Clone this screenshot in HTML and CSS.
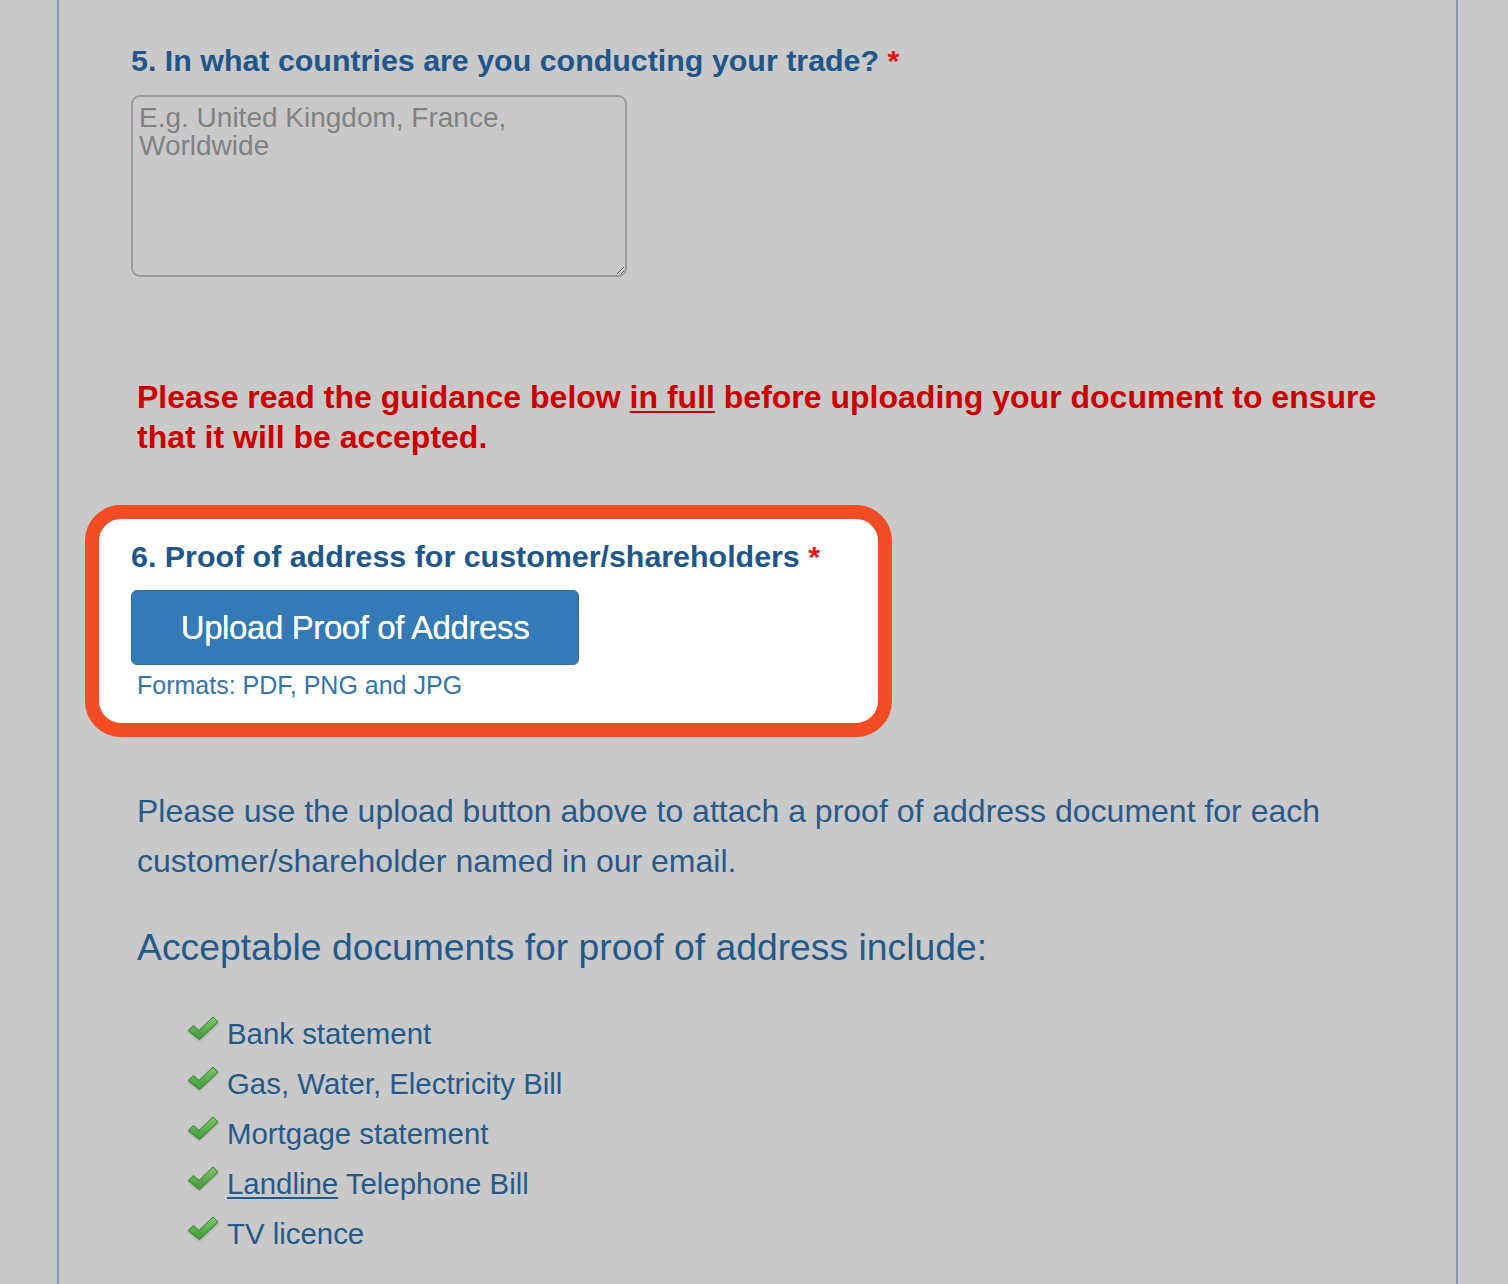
FILE: index.html
```html
<!DOCTYPE html>
<html lang="en">
<head>
<meta charset="utf-8">
<title>Proof of address</title>
<link rel="stylesheet" href="styles.css">
</head>
<body>
<div class="page">
  <div class="field">
    <h2 class="q">5. In what countries are you conducting your trade? <span class="req">*</span></h2>
    <textarea class="countries" placeholder="E.g. United Kingdom, France, Worldwide"></textarea>
  </div>

  <p class="warn">Please read the guidance below <u>in full</u> before uploading your document to ensure that it will be accepted.</p>

  <div class="highlight">
    <h2 class="q">6. Proof of address for customer/shareholders <span class="req">*</span></h2>
    <button class="upload" type="button">Upload Proof of Address</button>
    <div class="formats">Formats: PDF, PNG and JPG</div>
  </div>

  <p class="info">Please use the upload button above to attach a proof of address document for each customer/shareholder named in our email.</p>

  <h3 class="docs">Acceptable documents for proof of address include:</h3>

  <svg class="defs" width="0" height="0" aria-hidden="true"><defs><linearGradient id="g" x1="0" y1="0" x2="0" y2="1"><stop offset="0" stop-color="#7cc966"/><stop offset="1" stop-color="#3e9a36"/></linearGradient></defs></svg>
  <ul class="list">
    <li><svg class="tick" viewBox="0 0 32 26"><path d="M1.2 15.5 L6.5 10.5 L12 15.5 L26 2 L31 7 L12.5 24.5 Z" fill="url(#g)" stroke="#3a7f33" stroke-width="1" stroke-linejoin="round"/></svg><span>Bank statement</span></li>
    <li><svg class="tick" viewBox="0 0 32 26"><path d="M1.2 15.5 L6.5 10.5 L12 15.5 L26 2 L31 7 L12.5 24.5 Z" fill="url(#g)" stroke="#3a7f33" stroke-width="1" stroke-linejoin="round"/></svg><span>Gas, Water, Electricity Bill</span></li>
    <li><svg class="tick" viewBox="0 0 32 26"><path d="M1.2 15.5 L6.5 10.5 L12 15.5 L26 2 L31 7 L12.5 24.5 Z" fill="url(#g)" stroke="#3a7f33" stroke-width="1" stroke-linejoin="round"/></svg><span>Mortgage statement</span></li>
    <li><svg class="tick" viewBox="0 0 32 26"><path d="M1.2 15.5 L6.5 10.5 L12 15.5 L26 2 L31 7 L12.5 24.5 Z" fill="url(#g)" stroke="#3a7f33" stroke-width="1" stroke-linejoin="round"/></svg><span><u>Landline</u> Telephone Bill</span></li>
    <li><svg class="tick" viewBox="0 0 32 26"><path d="M1.2 15.5 L6.5 10.5 L12 15.5 L26 2 L31 7 L12.5 24.5 Z" fill="url(#g)" stroke="#3a7f33" stroke-width="1" stroke-linejoin="round"/></svg><span>TV licence</span></li>
  </ul>
</div>
</body>
</html>
```

FILE: styles.css
```css
html, body {
  margin: 0;
  padding: 0;
  background: #c9c9c9;
  height: 100%;
}
body {
  font-family: "Liberation Sans", Arial, Helvetica, sans-serif;
}
.page {
  margin-left: 57px;
  width: 1401px;
  min-height: 1284px;
  border-left: 2px solid #8796ae;
  border-right: 2px solid #8796ae;
  padding: 43px 0 0 0;
  box-sizing: border-box;
  overflow: hidden;
}
.q {
  margin: 0 0 0 72px;
  font-size: 30.4px;
  line-height: 34px;
  font-weight: bold;
  color: #21568a;
}
.req {
  color: #e8120c;
}
.countries {
  display: block;
  margin: 18px 0 0 72px;
  width: 496px;
  height: 182px;
  box-sizing: border-box;
  border: 2px solid #9a9a9a;
  border-radius: 9px;
  background: #c9c9c9;
  padding: 7px 6px;
  font-family: "Liberation Sans", Arial, sans-serif;
  font-size: 28px;
  line-height: 28px;
  color: #555;
  resize: vertical;
  outline: none;
}
.countries::placeholder {
  color: #828282;
}
.warn {
  margin: 100px 60px 0 78px;
  font-size: 32px;
  line-height: 40px;
  font-weight: bold;
  color: #cc0000;
}
.warn u {
  text-decoration-thickness: 2px;
  text-underline-offset: 3px;
}
.highlight {
  margin: 48px 0 0 26px;
  width: 807px;
  box-sizing: border-box;
  background: #fff;
  border: 14px solid #f24c24;
  border-radius: 36px;
  padding: 20px 0 24px 0;
}
.highlight .q {
  margin-left: 32px;
}
.upload {
  display: block;
  margin: 17px 0 0 32px;
  width: 448px;
  height: 75px;
  background: #337ab7;
  border: 1px solid #2e6da4;
  border-radius: 6px;
  color: #fff;
  font-family: "Liberation Sans", Arial, sans-serif;
  font-size: 33px;
  letter-spacing: -0.4px;
  padding: 0;
  text-shadow: 0 0 0.6px #fff;
}
.formats {
  margin: 6px 0 0 38px;
  font-size: 25px;
  line-height: 28px;
  color: #3373ae;
}
.info {
  margin: 49px 100px 0 78px;
  font-size: 32px;
  line-height: 50px;
  color: #275a8b;
}
.docs {
  margin: 39px 0 0 78px;
  font-size: 37.3px;
  line-height: 44px;
  font-weight: normal;
  color: #245a8b;
}
.defs {
  position: absolute;
  width: 0;
  height: 0;
}
.list {
  list-style: none;
  margin: 40px 0 0 128px;
  padding: 0;
}
.list li {
  display: flex;
  align-items: center;
  font-size: 29.4px;
  line-height: 50px;
  color: #245a8b;
}
.list li u {
  text-underline-offset: 3px;
}
.tick {
  width: 32px;
  height: 26px;
  margin-right: 8px;
  margin-top: -12px;
  flex: none;
  filter: drop-shadow(0 1px 1px rgba(0,0,0,0.25));
}
```
